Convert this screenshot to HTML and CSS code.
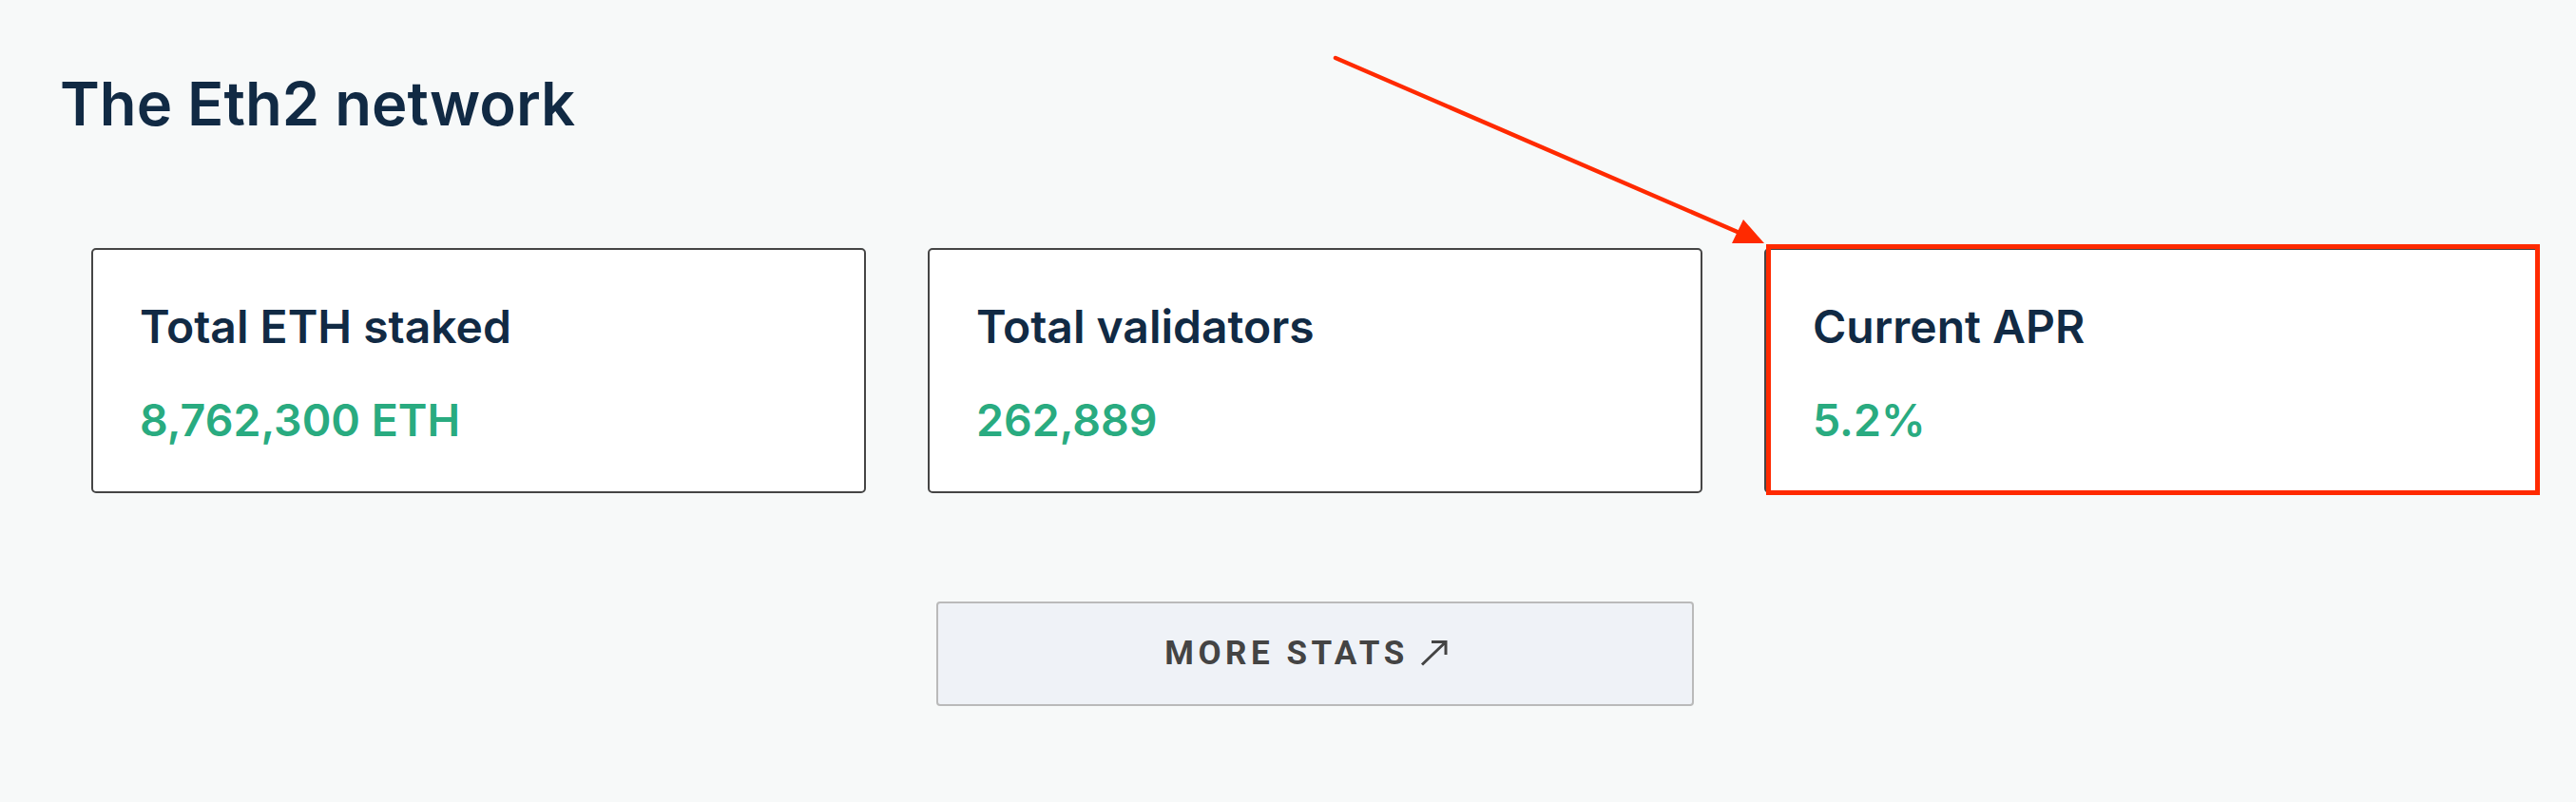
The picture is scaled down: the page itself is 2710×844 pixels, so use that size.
FILE: index.html
```html
<!DOCTYPE html>
<html lang="en">
<head>
<meta charset="utf-8">
<title>The Eth2 network</title>
<link rel="stylesheet" href="styles.css">
</head>
<body>
<main class="page">
  <h1 class="heading">The Eth2 network</h1>
  <section class="stats">
    <div class="card">
      <div class="card-title">Total ETH staked</div>
      <div class="card-value">8,762,300 ETH</div>
    </div>
    <div class="card">
      <div class="card-title">Total validators</div>
      <div class="card-value">262,889</div>
    </div>
    <div class="card">
      <div class="card-title">Current APR</div>
      <div class="card-value">5.2%</div>
    </div>
  </section>
  <div class="actions">
    <a class="more-btn" href="#">
      <span class="more-label">MORE STATS</span>
      <svg class="more-arrow" width="30" height="28" viewBox="0 0 30 28" aria-hidden="true">
        <path d="M2 26.5 L27 2.5 M12 2.5 L27 2.5 L27 16" fill="none" stroke="#444" stroke-width="3"/>
      </svg>
    </a>
  </div>
</main>
<svg class="annotation" width="2710" height="844" viewBox="0 0 2710 844" aria-hidden="true">
  <line x1="1405" y1="61" x2="1830" y2="245" stroke="#ff2a00" stroke-width="4.5" stroke-linecap="round"/>
  <polygon points="1856,256 1822,256 1834,231" fill="#ff2a00"/>
  <rect x="1860.5" y="259.5" width="809" height="259" fill="none" stroke="#ff2a00" stroke-width="5"/>
</svg>
</body>
</html>
```

FILE: styles.css
```css
* { box-sizing: border-box; }

html, body {
  margin: 0;
  padding: 0;
}

body {
  background: #f7f9f9;
  font-family: "Inter", "Noto Sans", sans-serif;
  color: #112a44;
  width: 2710px;
  height: 844px;
  overflow: hidden;
  position: relative;
}

.page {
  padding: 71px 9px 0 66px;
  display: flex;
  flex-direction: column;
}

.heading {
  margin: 0 0 0 -3px;
  font-size: 63.4px;
  line-height: 76.8px;
  font-weight: 600;
  color: #112a44;
}

.stats {
  margin: 113px 30px 0;
  display: grid;
  grid-template-columns: repeat(3, 815px);
  column-gap: 65px;
}

.card {
  height: 258px;
  background: #ffffff;
  border: 2px solid #454545;
  border-radius: 5px;
  padding: 52px 49px 0;
}

.card-title {
  font-size: 48px;
  line-height: 57.6px;
  font-weight: 600;
  color: #112a44;
}

.card-value {
  margin-top: 41.5px;
  font-size: 46.5px;
  line-height: 57.6px;
  font-weight: 600;
  color: #29ab80;
}

.actions {
  margin: 114px 30px 0;
  display: flex;
  justify-content: center;
}

.more-btn {
  width: 797px;
  height: 110px;
  background: #eff2f7;
  border: 2px solid #bababa;
  border-radius: 4px;
  display: flex;
  align-items: center;
  justify-content: center;
  text-decoration: none;
  color: #444444;
  padding-right: 18px;
}

.more-label {
  font-family: "Roboto", "Liberation Sans", sans-serif;
  font-weight: 700;
  font-size: 35px;
  letter-spacing: 4.5px;
  line-height: 1;
}

.more-arrow {
  margin-left: 12px;
  margin-top: -2px;
}

.annotation {
  position: absolute;
  left: 0;
  top: 0;
  pointer-events: none;
}
```
